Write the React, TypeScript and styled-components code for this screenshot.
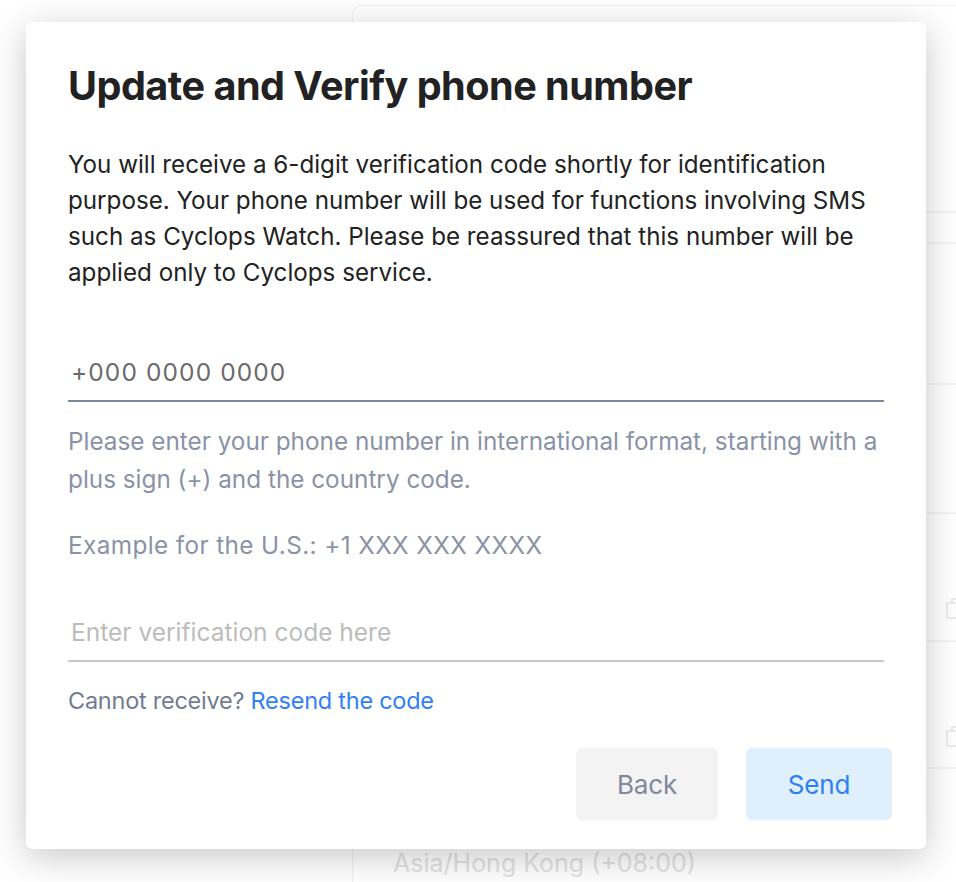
import { createGlobalStyle } from "styled-components";
import styled from "styled-components";

const GlobalStyle = createGlobalStyle`
  html, body {
    margin: 0;
    padding: 0;
    background: #ffffff;
  }
  body {
    font-family: Inter, "Noto Sans", "Liberation Sans", sans-serif;
    -webkit-font-smoothing: antialiased;
  }
`;

const Screen = styled.div`
  position: relative;
  width: 956px;
  height: 882px;
  overflow: hidden;
  background: #ffffff;
`;

/* faded page behind the dialog */
const Backdrop = styled.div`
  display: flex;
  height: 100%;
  padding: 5px 0 0 352px;
  box-sizing: border-box;
  opacity: 0.55;
`;

const PageCard = styled.div`
  flex: 1;
  display: flex;
  flex-direction: column;
  border: 1px solid #e6e6e6;
  border-right: none;
  border-bottom: none;
  border-radius: 10px 0 0 0;
`;

const PageRow = styled.div<{ $h: number }>`
  display: flex;
  align-items: flex-start;
  justify-content: flex-end;
  box-sizing: border-box;
  height: ${(p) => p.$h}px;
  flex-shrink: 0;
  border-bottom: 2px solid #ececec;
`;

const ActionRow = styled(PageRow)`
  padding-top: 83px;
`;

const LastRow = styled.div`
  padding: 80px 0 0 40px;
  line-height: 28px;
  color: #cbcbcb;
  font-size: 25px;
`;

const TrashIcon = () => (
  <svg width="20" height="22" viewBox="0 0 20 22" style={{ marginRight: -9 }}>
    <g fill="none" stroke="#dcdcdc" strokeWidth="2">
      <rect x="2" y="6" width="16" height="15" rx="2" />
      <path d="M1 6h18M7 6V2h6v4" />
    </g>
  </svg>
);

const Dialog = styled.div`
  position: absolute;
  left: 26px;
  top: 22px;
  width: 900px;
  box-sizing: border-box;
  padding: 42px 42px 29px;
  background: #ffffff;
  border-radius: 6px;
  box-shadow: 0 8px 36px rgba(0, 0, 0, 0.22);
  display: flex;
  flex-direction: column;
`;

const Title = styled.h1`
  margin: 0;
  font-size: 39.6px;
  line-height: 44px;
  font-weight: 700;
  letter-spacing: -0.5px;
  color: #222222;
`;

const Intro = styled.p`
  margin: 39px 0 0;
  font-size: 24.2px;
  line-height: 36px;
  letter-spacing: 0;
  color: #222222;
`;

const FieldWrap = styled.div<{ $top: number }>`
  margin-top: ${(p) => p.$top}px;
`;

const Field = styled.input<{ $line: string; $spaced?: boolean }>`
  display: block;
  width: 100%;
  box-sizing: border-box;
  height: 52px;
  margin: 0;
  padding: 0 3px 6px;
  border: none;
  border-bottom: 2px solid ${(p) => p.$line};
  outline: none;
  background: transparent;
  font-family: inherit;
  font-size: 24.5px;
  letter-spacing: ${(p) => (p.$spaced ? "1.1px" : "0")};
  color: #6b6b6b;
  &::placeholder {
    color: #bcbcbc;
  }
`;

const Hint = styled.p<{ $top: number; $ls?: number }>`
  margin: ${(p) => p.$top}px 0 0;
  font-size: 24.3px;
  line-height: 38px;
  letter-spacing: ${(p) => p.$ls ?? 0}px;
  color: #8a93a6;
`;

const Resend = styled.p`
  margin: 24px 0 0;
  font-size: 23.5px;
  line-height: 30px;
  letter-spacing: -0.25px;
  color: #727c90;
`;

const Link = styled.a`
  color: #2f80f5;
  text-decoration: none;
  cursor: pointer;
`;

const Actions = styled.div`
  display: flex;
  justify-content: flex-end;
  gap: 28px;
  margin: 32px -8px 0 0;
`;

const Button = styled.button<{ $primary?: boolean }>`
  height: 72px;
  min-width: ${(p) => (p.$primary ? 146 : 142)}px;
  border: none;
  border-radius: 6px;
  font-family: inherit;
  font-size: 26px;
  letter-spacing: -0.2px;
  background: ${(p) => (p.$primary ? "#dfeffc" : "#f3f3f3")};
  color: ${(p) => (p.$primary ? "#2f80f5" : "#7f889d")};
  cursor: pointer;
`;

export default function App() {
  return (
    <>
      <GlobalStyle />
      <Screen>
        <Backdrop>
          <PageCard>
            <PageRow $h={207} />
            <PageRow $h={31} />
            <PageRow $h={141} />
            <PageRow $h={129} />
            <ActionRow $h={128}>
              <TrashIcon />
            </ActionRow>
            <ActionRow $h={127}>
              <TrashIcon />
            </ActionRow>
            <LastRow>Asia/Hong Kong (+08:00)</LastRow>
          </PageCard>
        </Backdrop>

        <Dialog>
          <Title>Update and Verify phone number</Title>
          <Intro>
            You will receive a 6-digit verification code shortly for identification
            purpose. Your phone number will be used for functions involving SMS such
            as Cyclops Watch. Please be reassured that this number will be applied
            only to Cyclops service.
          </Intro>
          <FieldWrap $top={59}>
            <Field $line="#7d879b" $spaced defaultValue="+000 0000 0000" />
          </FieldWrap>
          <Hint $top={20}>
            Please enter your phone number in international format, starting with a
            plus sign (+) and the country code.
          </Hint>
          <Hint $top={28} $ls={0.4}>
            Example for the U.S.: +1 XXX XXX XXXX
          </Hint>
          <FieldWrap $top={46}>
            <Field $line="#c3c7d1" placeholder="Enter verification code here" />
          </FieldWrap>
          <Resend>
            Cannot receive? <Link>Resend the code</Link>
          </Resend>
          <Actions>
            <Button>Back</Button>
            <Button $primary>Send</Button>
          </Actions>
        </Dialog>
      </Screen>
    </>
  );
}
